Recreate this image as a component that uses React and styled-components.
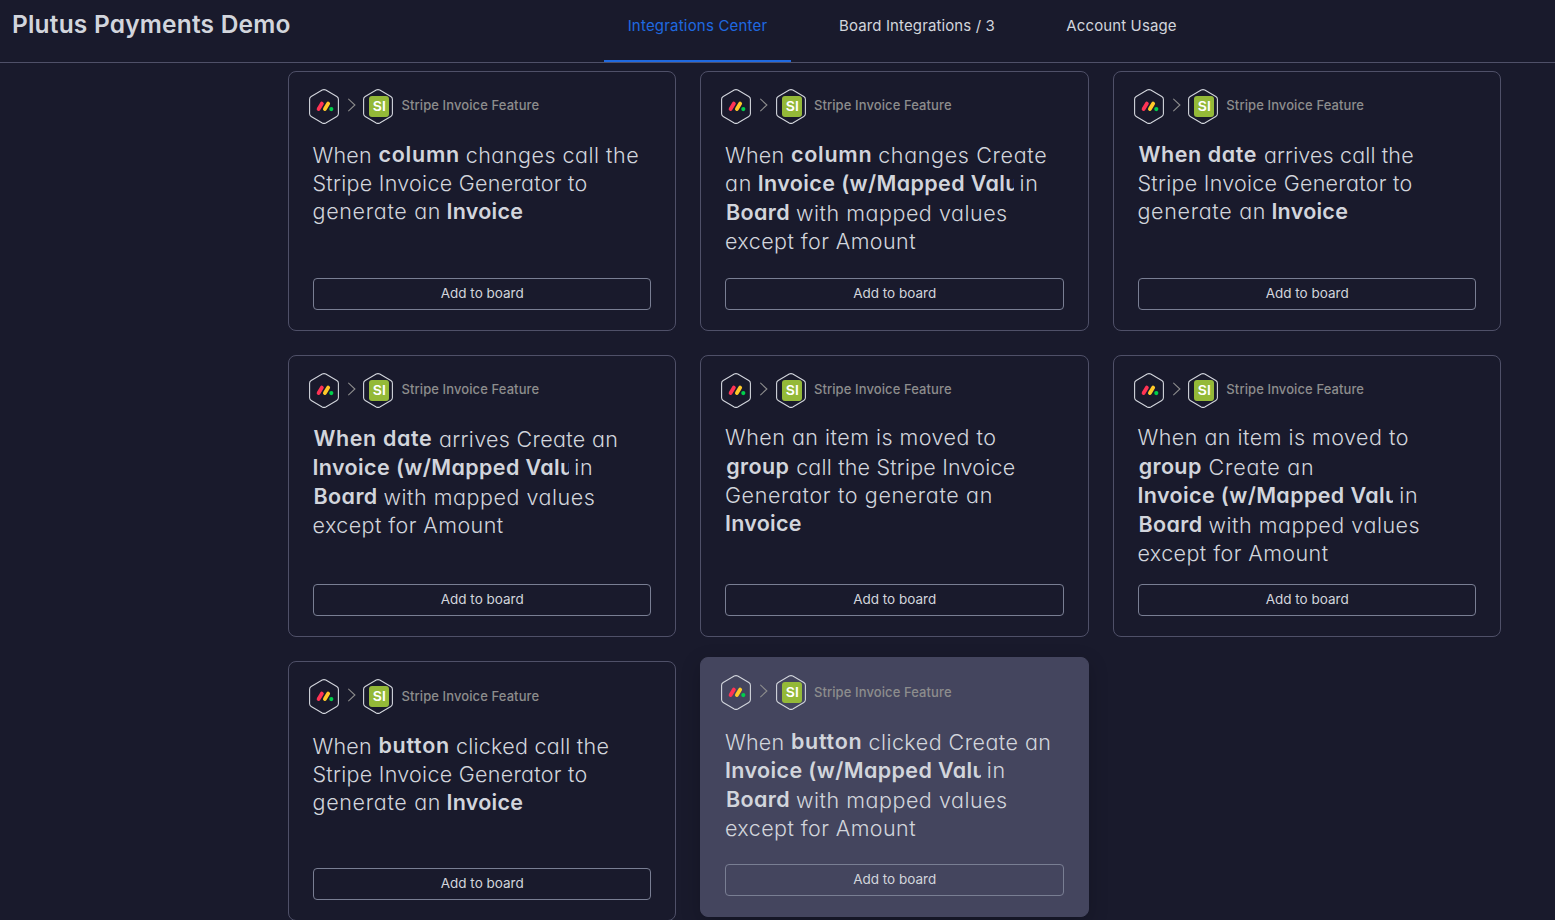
import React from "react";
import styled, { createGlobalStyle, css } from "styled-components";

const GlobalStyle = createGlobalStyle`
  *, *::before, *::after { box-sizing: border-box; }
  html, body { margin: 0; height: 100%; overflow: hidden; }
  body {
    background: #191a2c;
    color: #d2d5dc;
    font-family: Inter, sans-serif;
    -webkit-font-smoothing: antialiased;
  }
`;

const Page = styled.div`
  display: flex;
  flex-direction: column;
  height: 100vh;
  overflow: hidden;
`;

const Header = styled.header`
  display: grid;
  grid-template-columns: 604px auto;
  justify-content: start;
  flex: none;
  height: 63px;
  border-bottom: 1px solid #4f5068;
`;

const Title = styled.h1`
  margin: 0;
  padding: 9px 0 0 12px;
  font-size: 24.5px;
  line-height: 31px;
  font-weight: 600;
  letter-spacing: 0.2px;
  font-feature-settings: "cv11";
  white-space: nowrap;
`;

const Tabs = styled.nav`
  display: flex;
  gap: 24px;
`;

const Tab = styled.a`
  width: ${(p) => p.$width}px;
  height: 62px;
  padding: 14px 0 0 ${(p) => p.$inset || 0}px;
  border-bottom: 2px solid ${(p) => (p.$active ? "#1f69e0" : "transparent")};
  color: ${(p) => (p.$active ? "#1f69e0" : "#d2d5dc")};
  font-size: 15px;
  line-height: 24px;
  letter-spacing: ${(p) => (p.$active ? 0.2 : 0.12)}px;
  text-align: center;
  white-space: nowrap;
`;

const Grid = styled.main`
  display: grid;
  grid-template-columns: repeat(3, 1fr);
  grid-template-rows: 260px 282px 260px;
  gap: 24px;
  width: 1213.4px;
  margin: 8px 0 0 288px;
`;

const Chevron = styled.svg`
  margin: 0 7.45px 2px 9px;
`;

const Feature = styled.span`
  margin: 0 0 2px 8px;
  color: #8d8d8d;
  font-size: 13px;
  font-weight: 500;
  line-height: 20px;
  letter-spacing: 0.1px;
  white-space: nowrap;
`;

const Sentence = styled.div`
  margin: 15px 0 0 -0.5px;
  font-size: 21.5px;
  font-feature-settings: "cv11";
`;

const Card = styled.article`
  display: flex;
  flex-direction: column;
  padding: 16px 24px 20px;
  border: 1px solid #4f5068;
  border-radius: 8px;
  ${(p) =>
    p.$lowered &&
    css`
      ${Feature} {
        margin-bottom: 0;
      }
      ${Sentence} {
        margin-top: 16px;
      }
    `}
  ${(p) =>
    p.$hovered &&
    css`
      margin: -4px 0 4px;
      background: #44455e;
      border-color: #44455e;
      box-shadow: 0 6px 20px rgba(0, 0, 0, 0.2);
    `}
`;

const CardHeader = styled.div`
  display: flex;
  align-items: center;
  flex: none;
  height: 36px;
  margin-left: -4px;
`;

const Line = styled.div`
  display: flex;
  align-items: flex-start;
  padding-top: ${(p) => (p.$tall ? 2 : 0)}px;
`;

const Words = styled.span`
  flex: none;
  width: ${(p) => (p.$width ? `${p.$width}px` : "auto")};
  height: 28px;
  line-height: 28px;
  font-weight: 300;
  letter-spacing: ${(p) => p.$spacing}px;
  white-space: pre;
`;

const Value = styled(Words)`
  font-weight: 600;
`;

const Field = styled(Value)`
  margin-top: -1px;
  padding-left: ${(p) => p.$inset || 0}px;
`;

const ClippedValue = styled(Value)`
  width: 256px;
  margin-right: 5.8px;
  overflow: hidden;
`;

const AddButton = styled.button`
  flex: none;
  height: 32px;
  margin-top: auto;
  padding: 0 0 2px;
  border: 1px solid #797e93;
  border-radius: 4px;
  background: transparent;
  color: #d2d5dc;
  font: 400 13.5px/20px Inter, sans-serif;
`;

const HEX = "M13.2 1.1Q15 .2 16.8 1.1L27.8 7.5Q29.4 8.4 29.4 10.2V24.8Q29.4 26.6 27.8 27.5L16.8 33.9Q15 34.8 13.2 33.9L2.2 27.5Q.6 26.6 .6 24.8V10.2Q.6 8.4 2.2 7.5Z";

const MondayIcon = () => (
  <svg width="30" height="35" viewBox="0 0 30 35" fill="none">
    <path d={HEX} stroke="#d2d5dc" strokeWidth="1.1" />
    <path d="M9.6 20.1L12.9 14.6" stroke="#ff3354" strokeWidth="3.8" strokeLinecap="round" />
    <path d="M15.9 20.1L19.2 14.6" stroke="#ffc928" strokeWidth="3.8" strokeLinecap="round" />
    <circle cx="22.3" cy="20.1" r="2.1" fill="#00d04c" />
  </svg>
);

const StripeInvoiceIcon = () => (
  <svg width="30" height="35" viewBox="0 0 30 35" fill="none">
    <path d={HEX} stroke="#d2d5dc" strokeWidth="1.1" />
    <rect x="6" y="7.1" width="20" height="21" rx="3" fill="#94b938" />
    <text x="9.8" y="22.3" fill="#fff" fontFamily="Inter, sans-serif" fontSize="13.4" fontWeight="600" textLength="13" lengthAdjust="spacingAndGlyphs">SI</text>
  </svg>
);

const words = (text, spacing, width) => ({ as: Words, text, spacing, width });
const value = (text, spacing, width) => ({ as: Value, text, spacing, width });
const field = (text, spacing, width, inset) => ({ as: Field, text, spacing, width, inset });

const WHEN = words("When", 0.2, 66);
const COLUMN = field("column", 0.75, 87.2);
const BUTTON = field("button", 0.7, 77.5);
const WHEN_DATE = field("When date", 0.6, 126.5, 1);
const GROUP = field("group", 0.35, 71.2, 1.3);
const INVOICE = value("Invoice", 0.25);
const MAPPED = { as: ClippedValue, text: "Invoice (w/Mapped Valu", spacing: 0.38 };
const IN = words("in", 0.8);

const CALL_TAIL = [
  [words("Stripe Invoice Generator to", 0.27)],
  [words("generate an", 0.68, 134), INVOICE],
];
const CREATE_TAIL = [
  [field("Board", 0.4, 71, 1), words("with mapped values", 0.52)],
  [words("except for Amount", 0.42)],
];

const CARDS = [
  { lines: [[WHEN, COLUMN, words("changes call the", 0.5)], ...CALL_TAIL] },
  { lines: [[WHEN, COLUMN, words("changes Create", 0.66)], [words("an", 0.8, 32.8), MAPPED, IN], ...CREATE_TAIL] },
  { lines: [[WHEN_DATE, words("arrives call the", 0.14)], ...CALL_TAIL] },
  { lines: [[WHEN_DATE, words("arrives Create an", 0.32)], [MAPPED, IN], ...CREATE_TAIL] },
  {
    lines: [
      [words("When an item is moved to", 0.48)],
      [GROUP, words("call the Stripe Invoice", 0.19)],
      [words("Generator to generate an", 0.63)],
      [INVOICE],
    ],
  },
  {
    lines: [
      [words("When an item is moved to", 0.48)],
      [GROUP, words("Create an", 0.78)],
      [MAPPED, IN],
      ...CREATE_TAIL,
    ],
  },
  { lowered: true, lines: [[WHEN, BUTTON, words("clicked call the", 0.26)], ...CALL_TAIL] },
  { lowered: true, hovered: true, lines: [[WHEN, BUTTON, words("clicked Create an", 0.46)], [MAPPED, IN], ...CREATE_TAIL] },
];

function RecipeCard({ lines, hovered, lowered }) {
  return (
    <Card $hovered={hovered} $lowered={lowered}>
      <CardHeader>
        <MondayIcon />
        <Chevron width="8" height="14" viewBox="0 0 8 14" fill="none">
          <path d="M.3 .8L6.9 7L.3 13.2" stroke="#8d8d8d" strokeWidth="1.1" />
        </Chevron>
        <StripeInvoiceIcon />
        <Feature>Stripe Invoice Feature</Feature>
      </CardHeader>
      <Sentence>
        {lines.map((line, i) => (
          <Line key={i} $tall={line.some((part) => part.as === Field)}>
            {line.map(({ as: Part, text, spacing, width, inset }) => (
              <Part key={text} $spacing={spacing} $width={width} $inset={inset}>
                {text}
              </Part>
            ))}
          </Line>
        ))}
      </Sentence>
      <AddButton>Add to board</AddButton>
    </Card>
  );
}

export default function App() {
  return (
    <Page>
      <GlobalStyle />
      <Header>
        <Title>Plutus Payments Demo</Title>
        <Tabs>
          <Tab $active $width={187}>Integrations Center</Tab>
          <Tab $width={203} $inset={1}>Board Integrations / 3</Tab>
          <Tab $width={158} $inset={1}>Account Usage</Tab>
        </Tabs>
      </Header>
      <Grid>
        {CARDS.map((card, i) => (
          <RecipeCard key={i} {...card} />
        ))}
      </Grid>
    </Page>
  );
}
